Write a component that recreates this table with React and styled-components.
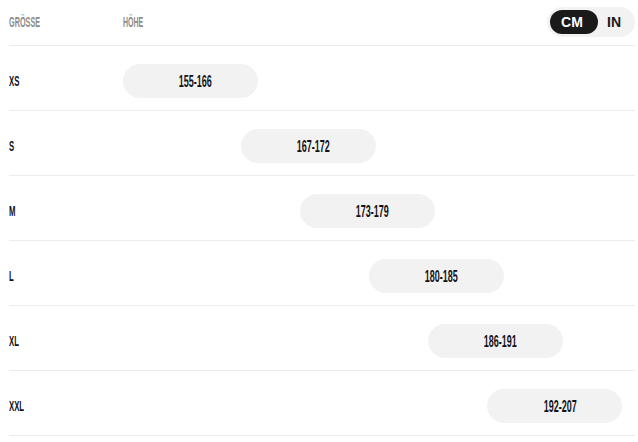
import React, { useState } from 'react'
import styled, { createGlobalStyle } from 'styled-components';

const GlobalStyle = createGlobalStyle`
    html, body {
        margin: 0;
        padding: 0;
        background: #ffffff;
        font-family: "Liberation Sans", Arial, sans-serif;
    }
`;

const SIZES = [
    { label: 'XS', min: 155, max: 166 },
    { label: 'S', min: 167, max: 172 },
    { label: 'M', min: 173, max: 179 },
    { label: 'L', min: 180, max: 185 },
    { label: 'XL', min: 186, max: 191 },
    { label: 'XXL', min: 192, max: 207 },
];

const SCALE_MIN = 155;
const SCALE_MAX = 207;

export default function App() {
    const [unit, setUnit] = useState('cm');

    return (
        <>
            <GlobalStyle />
            <Chart>
                <Header>
                    <LabelCol>
                        <Condensed $size={14} $muted $scale={0.52}>GRÖSSE</Condensed>
                    </LabelCol>
                    <HeadTitle>
                        <Condensed $size={14} $muted $scale={0.5}>HÖHE</Condensed>
                    </HeadTitle>
                    <Toggle>
                        <ToggleOption $active={unit === 'cm'} onClick={() => setUnit('cm')}>CM</ToggleOption>
                        <ToggleOption $active={unit === 'in'} onClick={() => setUnit('in')}>IN</ToggleOption>
                    </Toggle>
                </Header>

                {SIZES.map((size) => {
                    const pct = ((size.min - SCALE_MIN) / (SCALE_MAX - SCALE_MIN)) * 100;
                    return (
                        <Row key={size.label}>
                            <LabelCol>
                                <Condensed $size={15.5} $scale={0.5}>{size.label}</Condensed>
                            </LabelCol>
                            <Track>
                                <Bar style={{ marginLeft: `${pct}%` }}>
                                    <Condensed $size={16.5} $center $scale={0.545}>{size.min}-{size.max}</Condensed>
                                </Bar>
                            </Track>
                        </Row>
                    );
                })}
            </Chart>
        </>
    );
}

const Chart = styled.div`
    width: 638px;
    box-sizing: border-box;
    padding: 0 3px 0 9px;
`;

const Header = styled.div`
    display: flex;
    align-items: center;
    height: 43px;
    padding-bottom: 2px;
    border-bottom: 1px solid #ebebeb;
`;

const LabelCol = styled.div`
    width: 114px;
    flex-shrink: 0;
    display: flex;
    align-items: center;
`;

const HeadTitle = styled.div`
    flex: 1;
    display: flex;
    align-items: center;
`;

const Condensed = styled.span`
    display: inline-block;
    font-weight: 700;
    font-size: ${(p) => p.$size}px;
    line-height: 1;
    color: ${(p) => (p.$muted ? '#8c8c8c' : '#111118')};
    white-space: nowrap;
    transform: scaleX(${(p) => p.$scale});
    transform-origin: ${(p) => (p.$center ? 'center' : 'left')} center;
`;

const Toggle = styled.div`
    display: flex;
    align-items: center;
    height: 30px;
    padding: 0 3px;
    box-sizing: border-box;
    border-radius: 15px;
    background: #f2f2f2;
`;

const ToggleOption = styled.button`
    height: 24px;
    min-width: ${(p) => (p.$active ? '48px' : '34px')};
    padding: 0 ${(p) => (p.$active ? '12px 0 8px' : '2px 0 0')};
    border: none;
    border-radius: 12px;
    background: ${(p) => (p.$active ? '#1a1a1a' : 'transparent')};
    color: ${(p) => (p.$active ? '#ffffff' : '#1a1a1a')};
    font-family: "Liberation Sans", Arial, sans-serif;
    font-weight: 700;
    font-size: 14px;
    line-height: 24px;
    cursor: pointer;
`;

const Row = styled.div`
    display: flex;
    align-items: center;
    padding: 18px 0 12px;
    border-bottom: 1px solid #ebebeb;
`;

const Track = styled.div`
    flex: 1;
    display: flex;
`;

const Bar = styled.div`
    width: 135px;
    height: 34px;
    box-sizing: border-box;
    padding-left: 10px;
    flex-shrink: 0;
    border-radius: 17px;
    background: #f2f2f2;
    display: flex;
    align-items: center;
    justify-content: center;
`;
